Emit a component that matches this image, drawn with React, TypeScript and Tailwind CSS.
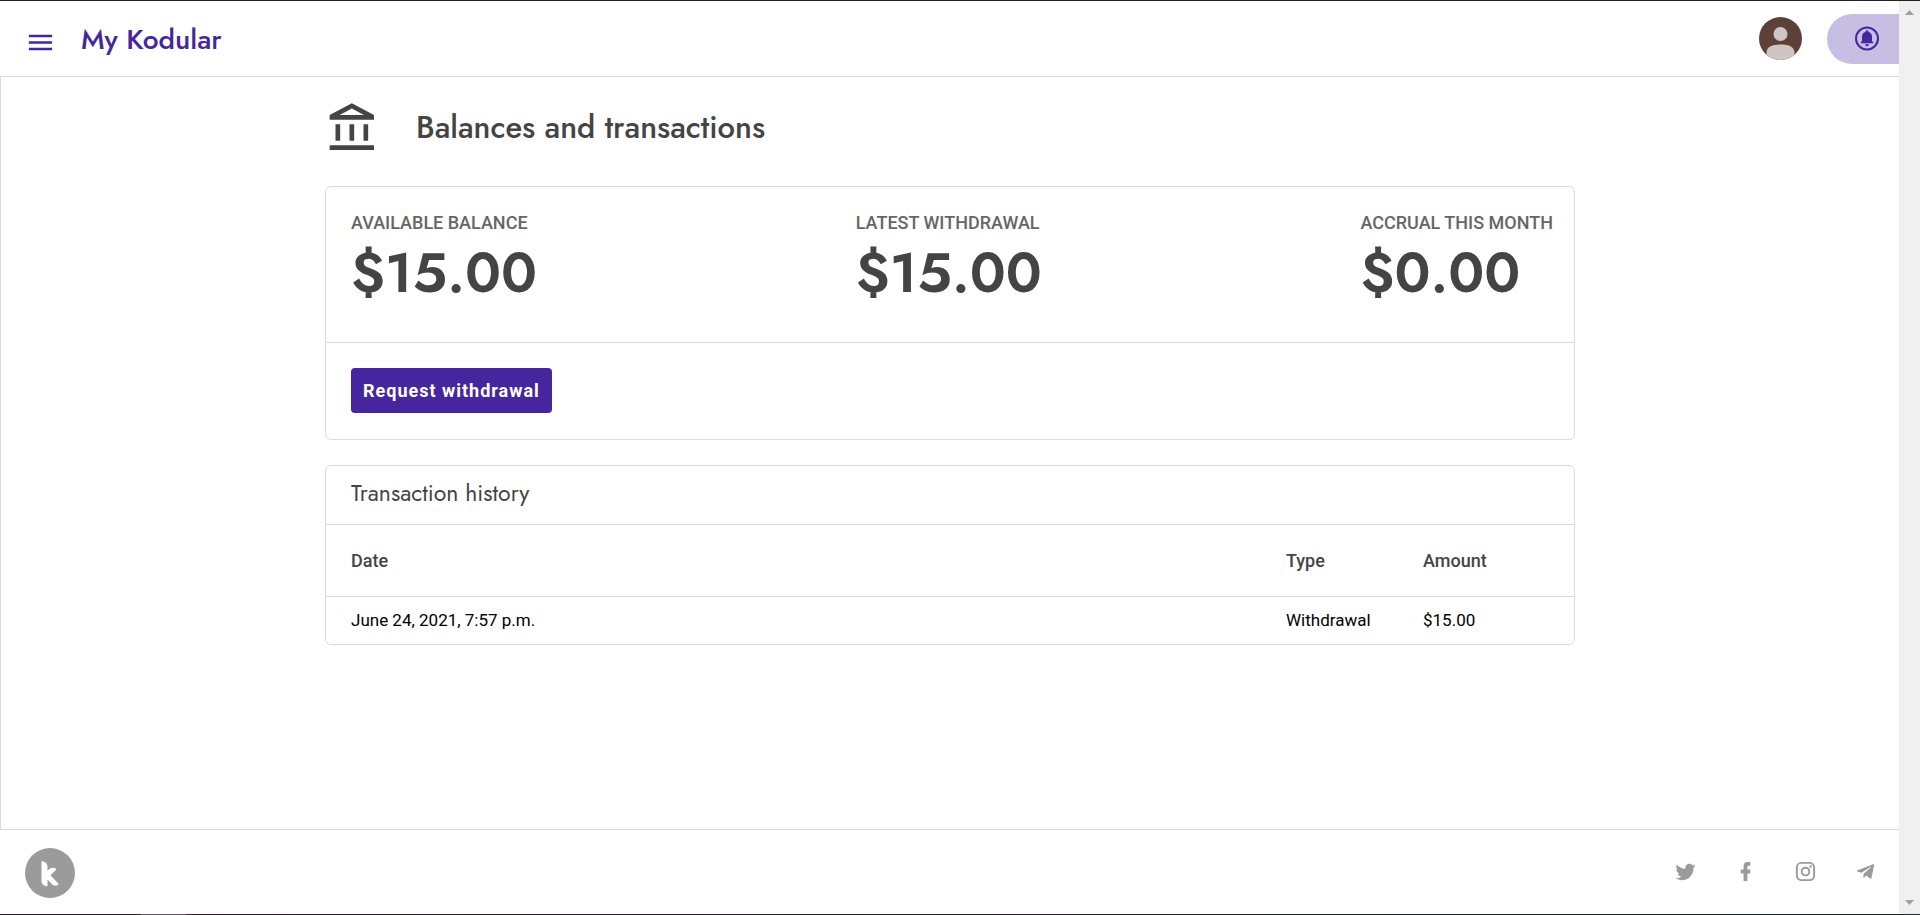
import type { ReactNode } from "react";

const headingFont = "font-[Jost,Lato,sans-serif]";

function Icon({ path, className }: { path: string; className: string }) {
  return (
    <svg viewBox="0 0 24 24" fill="currentColor" aria-hidden="true" className={className}>
      <path d={path} />
    </svg>
  );
}

const menuPath = "M3 6h18v2H3V6m0 5h18v2H3v-2m0 5h18v2H3v-2z";
const bankPath =
  "M6.5 10h-2v7h2v-7zm6 0h-2v7h2v-7zm8.5 9H2v2h19v-2zm-2.5-9h-2v7h2v-7zm-7-6.74L16.71 6H6.29l5.21-2.74m0-2.26L2 6v2h19V6l-9.5-5z";

const socials = [
  {
    name: "Twitter",
    path: "M22.46,6C21.69,6.35 20.86,6.58 20,6.69C20.88,6.16 21.56,5.32 21.88,4.31C21.05,4.81 20.13,5.16 19.16,5.36C18.37,4.5 17.26,4 16,4C13.65,4 11.73,5.92 11.73,8.29C11.73,8.63 11.77,8.96 11.84,9.27C8.28,9.09 5.11,7.38 3,4.79C2.63,5.42 2.42,6.16 2.42,6.94C2.42,8.43 3.17,9.75 4.33,10.5C3.62,10.5 2.96,10.3 2.38,10C2.38,10 2.38,10 2.38,10.03C2.38,12.11 3.86,13.85 5.82,14.24C5.46,14.34 5.08,14.39 4.69,14.39C4.42,14.39 4.15,14.36 3.89,14.31C4.43,16 6,17.26 7.89,17.29C6.43,18.45 4.58,19.13 2.56,19.13C2.22,19.13 1.88,19.11 1.54,19.07C3.44,20.29 5.7,21 8.12,21C16,21 20.33,14.46 20.33,8.79C20.33,8.6 20.33,8.42 20.32,8.23C21.16,7.63 21.88,6.87 22.46,6Z",
  },
  {
    name: "Facebook",
    path: "M17,2V6H15C14.31,6 14,6.81 14,7.5V10H17V14H14V22H10V14H7V10H10V6A4,4 0 0,1 14,2H17Z",
  },
  {
    name: "Instagram",
    path: "M7.8,2H16.2C19.4,2 22,4.6 22,7.8V16.2A5.8,5.8 0 0,1 16.2,22H7.8C4.6,22 2,19.4 2,16.2V7.8A5.8,5.8 0 0,1 7.8,2M7.6,4A3.6,3.6 0 0,0 4,7.6V16.4C4,18.39 5.61,20 7.6,20H16.4A3.6,3.6 0 0,0 20,16.4V7.6C20,5.61 18.39,4 16.4,4H7.6M17.25,5.5A1.25,1.25 0 0,1 18.5,6.75A1.25,1.25 0 0,1 17.25,8A1.25,1.25 0 0,1 16,6.75A1.25,1.25 0 0,1 17.25,5.5M12,7A5,5 0 0,1 17,12A5,5 0 0,1 12,17A5,5 0 0,1 7,12A5,5 0 0,1 12,7M12,9A3,3 0 0,0 9,12A3,3 0 0,0 12,15A3,3 0 0,0 15,12A3,3 0 0,0 12,9Z",
  },
  {
    name: "Telegram",
    path: "M9.78,18.65L10.06,14.42L17.74,7.5C18.08,7.19 17.67,7.04 17.22,7.31L7.74,13.3L3.64,12C2.76,11.75 2.75,11.14 3.84,10.7L19.81,4.54C20.54,4.21 21.24,4.72 20.96,5.84L18.24,18.65C18.05,19.56 17.5,19.78 16.74,19.36L12.6,16.3L10.61,18.23C10.38,18.46 10.19,18.65 9.78,18.65Z",
  },
];

const balances = [
  { label: "Available balance", amount: "$15.00" },
  { label: "Latest withdrawal", amount: "$15.00" },
  { label: "Accrual this month", amount: "$0.00" },
];

const transactions = [{ date: "June 24, 2021, 7:57 p.m.", type: "Withdrawal", amount: "$15.00" }];

function Card({ children }: { children: ReactNode }) {
  return <section className="rounded-md border border-[#dbdbdb]">{children}</section>;
}

function Header() {
  return (
    <header className="flex h-[76px] items-center border-b border-[#dbdbdb] text-[#45269e]">
      <button type="button" aria-label="Open menu" className="mt-2 ml-[25px]">
        <Icon path={menuPath} className="size-[31px]" />
      </button>
      <a href="#" className={`${headingFont} ml-[25px] pt-0.5 text-[28px] leading-9 font-medium`}>
        My Kodular
      </a>
      <button type="button" aria-label="Account" className="ml-auto size-[43px] overflow-hidden rounded-full">
        <svg viewBox="0 0 43 43" className="size-full" aria-hidden="true">
          <rect width="43" height="43" fill="#5d4037" />
          <circle cx="21.5" cy="17" r="7" fill="#cfc5c2" />
          <path d="M7.5 43v-7c0-6 5-8.5 14-8.5s14 2.500 14 8.500v7z" fill="#cfc5c2" />
        </svg>
      </button>
      <button
        type="button"
        aria-label="Notifications"
        className="ml-[25px] flex h-[50px] w-[72px] items-center rounded-l-full bg-[#c7bee3] pl-[26px]"
      >
        <svg viewBox="0 0 28 28" className="size-[28px]" aria-hidden="true">
          <circle cx="14" cy="13.500" r="11" fill="none" stroke="currentColor" strokeWidth="2" />
          <path
            d="M14 5.200c.8 0 1.300.6 1.300 1.300v.3c2.200.6 3.700 2.500 3.700 4.900v4.300l1.200 1.300v1H7.800v-1l1.200-1.300v-4.300c0-2.400 1.500-4.300 3.700-4.900v-.3c0-.7.5-1.300 1.300-1.300zM12 19.300h4c0 1.100-.9 1.900-2 1.900s-2-.8-2-1.900z"
            fill="currentColor"
          />
        </svg>
      </button>
    </header>
  );
}

function Footer() {
  return (
    <footer className="flex items-start justify-between pt-[18px] pr-[22px] pb-4 pl-[25px] text-[#9b9b9b]">
      <a href="#" aria-label="Kodular">
        <svg viewBox="0 0 50 50" className="size-[50px]" aria-hidden="true">
          <circle cx="25" cy="25" r="25" fill="currentColor" />
          <path
            d="M16.500 13c4 .4 6 2.800 6 6.300v3.700c1.200-2.200 3.400-3.500 5.800-3.300 1.500.1 2.500.8 3 1.700l-5.800 5.900 8.200 8.700c-1 1.700-4.300 2.400-6.600.2l-4.600-4.700v6.700c-3.600 0-6-1.900-6-5.200z"
            fill="#fff"
          />
        </svg>
      </a>
      <nav aria-label="Social" className="flex gap-[37px] pt-3">
        {socials.map((s) => (
          <a key={s.name} href="#" aria-label={s.name}>
            <Icon path={s.path} className="size-[23px]" />
          </a>
        ))}
      </nav>
    </footer>
  );
}

export default function App() {
  return (
    <div className="flex min-h-screen flex-col border-t border-[#222222] bg-white font-[Roboto,sans-serif] text-[#444444]">
      <div className="flex flex-1">
        <div className="flex min-w-0 flex-1 flex-col">
          <Header />
          <main className="flex-1 border-b border-l border-[#dbdbdb]">
            <div className="mx-auto flex max-w-[1250px] flex-col gap-[25px] pt-6">
              <div className="mb-1 flex h-14 items-start">
                <Icon path={bankPath} className="size-14" />
                <h1 className={`${headingFont} ml-[35px] pt-[7px] text-[31px] leading-10 font-medium`}>
                  Balances and transactions
                </h1>
              </div>
              <Card>
                <div className="flex h-[155px] justify-between pt-[22px] pr-[21px] pl-[25px]">
                  {balances.map((b) => (
                    <div key={b.label}>
                      <h2 className="text-lg leading-7 font-medium text-[#666666] uppercase">{b.label}</h2>
                      <p className={`${headingFont} text-[56px] leading-[72px] font-semibold`}>{b.amount}</p>
                    </div>
                  ))}
                </div>
                <div className="border-t border-[#dbdbdb] px-[25px] pt-[25px] pb-[26px]">
                  <button
                    type="button"
                    className="block h-[45px] rounded bg-[#45269e] px-3 text-lg font-bold tracking-[1px] text-white"
                  >
                    Request withdrawal
                  </button>
                </div>
              </Card>
              <Card>
                <h2 className={`${headingFont} px-[25px] pt-[10px] pb-[14px] text-[23px] leading-[34px]`}>
                  Transaction history
                </h2>
                <table className="w-full text-left">
                  <thead className="text-lg">
                    <tr className="h-[72px] border-t border-[#dbdbdb]">
                      <th className="px-[25px] font-medium">Date</th>
                      <th className="w-[137px] px-[25px] font-medium">Type</th>
                      <th className="w-[176px] px-[25px] font-medium">Amount</th>
                    </tr>
                  </thead>
                  <tbody className="text-[17px] text-black">
                    {transactions.map((t) => (
                      <tr key={t.date} className="h-[47px] border-t border-[#dbdbdb]">
                        <td className="px-[25px]">{t.date}</td>
                        <td className="px-[25px]">{t.type}</td>
                        <td className="px-[25px]">{t.amount}</td>
                      </tr>
                    ))}
                  </tbody>
                </table>
              </Card>
            </div>
          </main>
          <Footer />
        </div>
        <div aria-hidden="true" className="flex w-[21px] flex-col items-center justify-between bg-[#f0f0f0] py-[9px] text-[#a0a0a0]">
          <svg viewBox="0 0 9 5" className="h-[5px] w-[9px]">
            <path d="M0 5L4.500 0L9 5z" fill="currentColor" />
          </svg>
          <svg viewBox="0 0 9 5" className="h-[5px] w-[9px]">
            <path d="M0 0L4.500 5L9 0z" fill="currentColor" />
          </svg>
        </div>
      </div>
      <div aria-hidden="true" className="flex h-px">
        <div className="w-[141px] bg-[#35202a]" />
        <div className="w-[45px] bg-[#66555d]" />
        <div className="flex-1 bg-linear-to-r from-[#35202a] to-[#1c2b2b]" />
      </div>
    </div>
  );
}
